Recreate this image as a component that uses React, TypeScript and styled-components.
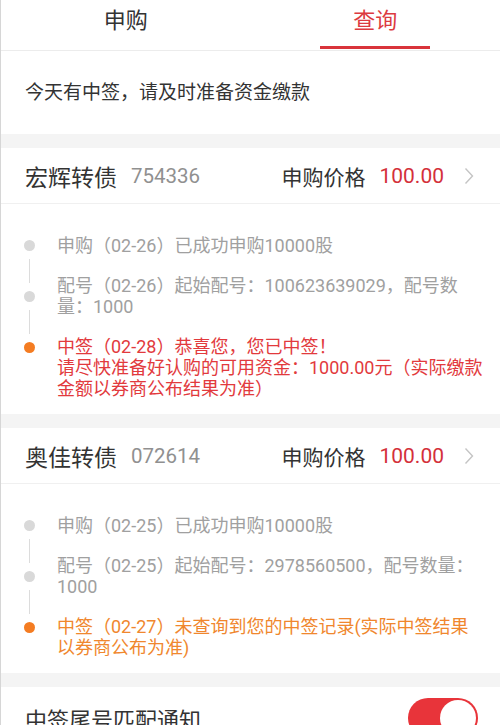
import styled, { createGlobalStyle } from 'styled-components';

type Tone = 'done' | 'win' | 'miss';

interface IStep {
  tone: Tone;
  text: string;
}

interface IBond {
  name: string;
  code: string;
  price: string;
  steps: IStep[];
}

const bonds: IBond[] = [
  {
    name: '宏辉转债',
    code: '754336',
    price: '100.00',
    steps: [
      { tone: 'done', text: '申购（02-26）已成功申购10000股' },
      { tone: 'done', text: '配号（02-26）起始配号：100623639029，配号数\n量：1000' },
      {
        tone: 'win',
        text: '中签（02-28）恭喜您，您已中签！\n请尽快准备好认购的可用资金：1000.00元（实际缴款\n金额以券商公布结果为准）',
      },
    ],
  },
  {
    name: '奥佳转债',
    code: '072614',
    price: '100.00',
    steps: [
      { tone: 'done', text: '申购（02-25）已成功申购10000股' },
      { tone: 'done', text: '配号（02-25）起始配号：2978560500，配号数量：\n1000' },
      { tone: 'miss', text: '中签（02-27）未查询到您的中签记录(实际中签结果\n以券商公布为准)' },
    ],
  },
];

const toneColor: Record<Tone, string> = {
  done: '#a0a0a0',
  win: '#e23a3d',
  miss: '#f0872e',
};

const dotColor: Record<Tone, string> = {
  done: '#d9d9d9',
  win: '#f47c22',
  miss: '#f47c22',
};

export default function App() {
  return (
    <Page>
      <GlobalStyle />
      <Tabs>
        <Tab>
          <TabLabel>申购</TabLabel>
          <TabBar />
        </Tab>
        <Tab $active>
          <TabLabel>查询</TabLabel>
          <TabBar $active />
        </Tab>
      </Tabs>
      <Notice>今天有中签，请及时准备资金缴款</Notice>
      {bonds.map((bond) => (
        <Card key={bond.code}>
          <CardHeader>
            <BondName>{bond.name}</BondName>
            <BondCode>{bond.code}</BondCode>
            <PriceLabel>申购价格</PriceLabel>
            <Price>{bond.price}</Price>
            <Chevron width="10" height="18" viewBox="0 0 10 18">
              <path d="M1.5 1.5 L8.5 9 L1.5 16.5" fill="none" stroke="#c4c4c4" strokeWidth="1.4" />
            </Chevron>
          </CardHeader>
          <Timeline>
            <Rail>
              {bond.steps.map((step, i) => (
                <RailStep key={i}>
                  {i > 0 && <RailLine />}
                  <Dot $tone={step.tone} />
                </RailStep>
              ))}
            </Rail>
            <Entries>
              {bond.steps.map((step, i) => (
                <Entry key={i} $tone={step.tone}>
                  {step.text}
                </Entry>
              ))}
            </Entries>
          </Timeline>
        </Card>
      ))}
      <SettingRow>
        <SettingLabel>中签尾号匹配通知</SettingLabel>
        <Toggle>
          <Knob />
        </Toggle>
      </SettingRow>
    </Page>
  );
}

const GlobalStyle = createGlobalStyle`
  body {
    margin: 0;
    background: #ffffff;
    font-family: Roboto, 'Noto Sans CJK SC', sans-serif;
    text-spacing-trim: space-all;
  }
`;

const Page = styled.div`
  height: 725px;
  overflow: hidden;
  background: #f4f4f4;
  border-left: 1px solid #d6d6d6;
`;

const Tabs = styled.div`
  display: flex;
  height: 50px;
  background: #ffffff;
  border-bottom: 1px solid #ececec;
`;

const Tab = styled.div<{ $active?: boolean }>`
  flex: 1;
  display: flex;
  flex-direction: column;
  align-items: center;
  justify-content: space-between;
  color: ${(props) => (props.$active ? '#dc3a40' : '#333333')};
`;

const TabLabel = styled.span`
  font-size: 22px;
  line-height: 30px;
  margin-top: 6px;
`;

const TabBar = styled.div<{ $active?: boolean }>`
  width: 110px;
  height: 3px;
  margin-bottom: 1px;
  background: ${(props) => (props.$active ? '#d9343b' : 'transparent')};
`;

const Notice = styled.div`
  display: flex;
  align-items: center;
  height: 83px;
  padding: 0 24px 4px;
  box-sizing: border-box;
  margin-bottom: 14px;
  background: #ffffff;
  color: #333333;
  font-size: 19px;
`;

const Card = styled.section`
  background: #ffffff;
  margin-bottom: 14px;
`;

const CardHeader = styled.div`
  display: flex;
  align-items: center;
  height: 55px;
  padding: 0 26px 0 24px;
  border-bottom: 1px solid #f0f0f0;
`;

const BondName = styled.span`
  font-size: 23px;
  color: #333333;
`;

const BondCode = styled.span`
  margin-left: 14px;
  font-size: 20.5px;
  color: #909090;
  flex: 1;
`;

const PriceLabel = styled.span`
  font-size: 21px;
  color: #333333;
`;

const Price = styled.span`
  margin-left: 14px;
  font-size: 21px;
  color: #d4303a;
`;

const Chevron = styled.svg`
  margin-left: 20px;
  display: block;
`;

const Timeline = styled.div`
  display: grid;
  grid-template-columns: 56px 1fr;
  padding: 31px 8px 15px 0;
`;

const Rail = styled.div`
  display: flex;
  flex-direction: column;
  align-items: center;
  padding-top: 5px;
`;

const RailStep = styled.div`
  display: flex;
  flex-direction: column;
  align-items: center;
`;

const RailLine = styled.div`
  width: 1px;
  height: 24px;
  margin: 8px 0;
  background: #dcdcdc;
`;

const Dot = styled.div<{ $tone: Tone }>`
  width: 11px;
  height: 11px;
  border-radius: 50%;
  background: ${(props) => dotColor[props.$tone]};
`;

const Entries = styled.div`
  display: flex;
  flex-direction: column;
  gap: 19px;
`;

const Entry = styled.div<{ $tone: Tone }>`
  font-size: 18px;
  line-height: 21px;
  white-space: pre-line;
  color: ${(props) => toneColor[props.$tone]};
`;

const SettingRow = styled.div`
  display: flex;
  align-items: center;
  justify-content: space-between;
  height: 62px;
  padding: 0 22px 0 24px;
  background: #ffffff;
`;

const SettingLabel = styled.span`
  font-size: 22px;
  color: #333333;
`;

const Toggle = styled.div`
  display: flex;
  justify-content: flex-end;
  width: 70px;
  height: 40px;
  border-radius: 20px;
  background: #e8343a;
  box-sizing: border-box;
  padding: 2px;
`;

const Knob = styled.div`
  width: 36px;
  height: 36px;
  border-radius: 50%;
  background: #ffffff;
`;
